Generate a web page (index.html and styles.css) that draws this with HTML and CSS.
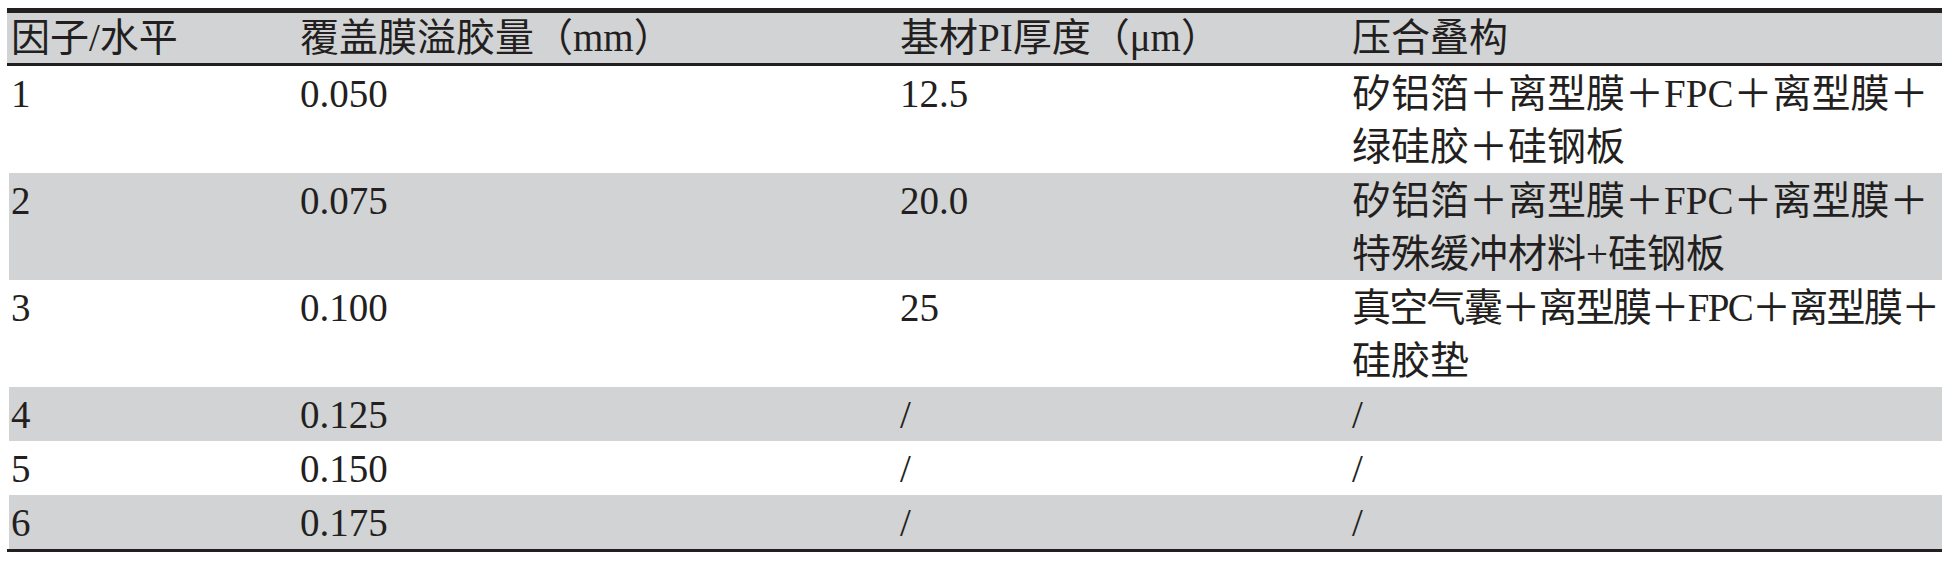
FILE: index.html
```html
<!DOCTYPE html>
<html lang="zh-CN">
<head>
<meta charset="utf-8">
<title>因子水平表</title>
<link rel="stylesheet" href="styles.css">
</head>
<body>
<div class="table">
  <div class="row head">
    <div class="cell">因子/水平</div>
    <div class="cell">覆盖膜溢胶量（mm）</div>
    <div class="cell">基材PI厚度（μm）</div>
    <div class="cell">压合叠构</div>
  </div>
  <div class="row">
    <div class="cell">1</div>
    <div class="cell">0.050</div>
    <div class="cell">12.5</div>
    <div class="cell">矽铝箔＋离型膜＋FPC＋离型膜＋<br>绿硅胶＋硅钢板</div>
  </div>
  <div class="row shade">
    <div class="cell">2</div>
    <div class="cell">0.075</div>
    <div class="cell">20.0</div>
    <div class="cell">矽铝箔＋离型膜＋FPC＋离型膜＋<br>特殊缓冲材料+硅钢板</div>
  </div>
  <div class="row">
    <div class="cell">3</div>
    <div class="cell">0.100</div>
    <div class="cell">25</div>
    <div class="cell"><span class="tight">真空气囊＋离型膜＋FPC＋离型膜＋</span><br>硅胶垫</div>
  </div>
  <div class="row shade">
    <div class="cell">4</div>
    <div class="cell">0.125</div>
    <div class="cell">/</div>
    <div class="cell">/</div>
  </div>
  <div class="row">
    <div class="cell">5</div>
    <div class="cell">0.150</div>
    <div class="cell">/</div>
    <div class="cell">/</div>
  </div>
  <div class="row shade">
    <div class="cell">6</div>
    <div class="cell">0.175</div>
    <div class="cell">/</div>
    <div class="cell">/</div>
  </div>
</div>
</body>
</html>
```

FILE: styles.css
```css
html, body {
  margin: 0;
  padding: 0;
  background: #ffffff;
}

body {
  padding: 8px 0 0 7px;
  font-family: "Liberation Serif", "Noto Sans CJK SC", serif;
  font-size: 39px;
  font-weight: 400;
  color: #231f20;
}

.table {
  width: 1935px;
  border-top: 5px solid #231f20;
  border-bottom: 3px solid #231f20;
}

.row {
  display: grid;
  grid-template-columns: 289px 600px 452px 1fr;
  line-height: 53px;
  padding-top: 1px;
}

.row.head {
  background: #d1d3d4;
  line-height: 50px;
  height: 50px;
  padding-top: 0;
  border-bottom: 3px solid #231f20;
}

.row.shade {
  background: linear-gradient(to right, #ffffff 2px, #d1d3d4 2px);
}

.cell {
  padding-left: 4px;
  white-space: nowrap;
}

.tight {
  letter-spacing: -1.7px;
}
```
